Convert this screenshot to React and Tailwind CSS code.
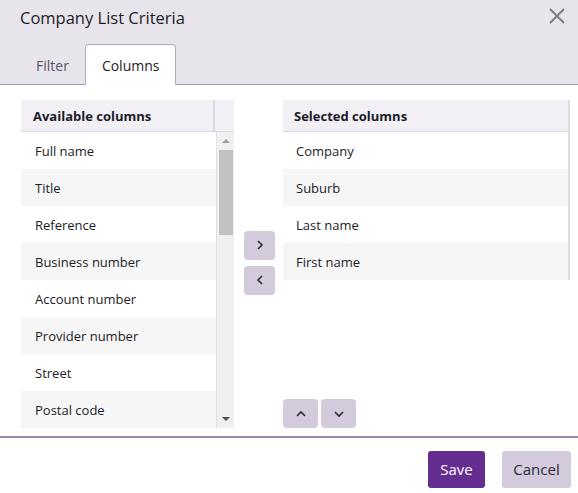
import React from 'react';

const available = [
  'Full name',
  'Title',
  'Reference',
  'Business number',
  'Account number',
  'Provider number',
  'Street',
  'Postal code',
];

const selected = ['Company', 'Suburb', 'Last name', 'First name'];

const Chevron = ({ dir }) => {
  const paths = {
    right: 'M2 1 L6 5 L2 9',
    left: 'M6 1 L2 5 L6 9',
    up: 'M1 6 L5 2 L9 6',
    down: 'M1 2 L5 6 L9 2',
  };
  const horiz = dir === 'left' || dir === 'right';
  return (
    <svg width={horiz ? 8 : 10} height={horiz ? 10 : 8} viewBox={horiz ? '0 0 8 10' : '0 0 10 8'}>
      <path d={paths[dir]} fill="none" stroke="#2a2a3a" strokeWidth="1.6" />
    </svg>
  );
};

const App = () => {
  return (
    <div
      className="w-[578px] h-[493px] bg-white flex flex-col text-[#1c1c28]"
      style={{ fontFamily: '"Open Sans", "Noto Sans", sans-serif' }}
    >
      {/* Header */}
      <div className="h-[85px] bg-[#e8e4ec] border-b border-[#a79bb2] flex flex-col">
        <div className="h-[44px] flex items-start justify-between pl-[20px] pr-[12px]">
          <span className="mt-[6px] text-[16.5px] text-[#1c1c28]">Company List Criteria</span>
          <svg width="18" height="18" viewBox="0 0 18 18" className="mt-[7px]">
            <path d="M2 2 L16 16 M16 2 L2 16" stroke="#7a7a80" strokeWidth="1.8" />
          </svg>
        </div>
        <div className="flex items-end pl-[20px] h-[40px]">
          <div className="px-4 h-[40px] pt-[2px] flex items-center text-[14px] text-[#5a5366]">Filter</div>
          <div className="px-4 h-[41px] -mb-px flex items-center text-[14px] bg-white border border-b-0 border-[#b3a9bd] rounded-t-[4px]">
            Columns
          </div>
        </div>
      </div>

      {/* Content */}
      <div className="h-[351px] flex pt-[15px] pb-[8px] pl-[21px] pr-[8px]">
        {/* Available */}
        <div className="w-[213px] flex flex-col">
          <div className="h-[32px] flex bg-[#f2f0f5] border-b border-[#dcd7e2]">
            <div className="w-[194px] flex items-center pl-[12px] pt-[2px] text-[13px] font-bold border-r-2 border-[#dcd7e2]">
              Available columns
            </div>
            <div className="flex-1" />
          </div>
          <div className="flex flex-1">
            <div className="w-[195px] flex flex-col">
              {available.map((c, i) => (
                <div
                  key={c}
                  className={`h-[37px] flex items-center pl-[14px] pt-[2px] text-[13px] ${i % 2 ? 'bg-[#f6f6f6]' : 'bg-white'}`}
                >
                  {c}
                </div>
              ))}
            </div>
            <div className="flex-1 bg-[#f0f0f0] border-l border-[#e0e0e0] flex flex-col items-center">
              <div className="h-[18px] flex items-center justify-center">
                <div className="w-0 h-0 border-l-[4px] border-r-[4px] border-b-[4px] border-l-transparent border-r-transparent border-b-[#a3a3a3]" />
              </div>
              <div className="w-[14px] h-[85px] bg-[#c1c1c1]" />
              <div className="flex-1" />
              <div className="h-[18px] flex items-center justify-center">
                <div className="w-0 h-0 border-l-[4px] border-r-[4px] border-t-[4px] border-l-transparent border-r-transparent border-t-[#505050]" />
              </div>
            </div>
          </div>
        </div>

        {/* Move buttons */}
        <div className="ml-[10px] w-[31px] flex flex-col justify-center gap-[6px] pb-[3px]">
          <button className="h-[29px] rounded-[4px] bg-[#d3cbdc] flex items-center justify-center">
            <Chevron dir="right" />
          </button>
          <button className="h-[29px] rounded-[4px] bg-[#d3cbdc] flex items-center justify-center">
            <Chevron dir="left" />
          </button>
        </div>

        {/* Selected */}
        <div className="ml-[8px] flex-1 flex flex-col justify-between">
          <div className="flex flex-col border-r-2 border-[#dedbe2]">
            <div className="h-[32px] flex items-center pl-[11px] pt-[2px] bg-[#f2f0f5] border-b border-[#dcd7e2] text-[13px] font-bold">
              Selected columns
            </div>
            {selected.map((c, i) => (
              <div
                key={c}
                className={`h-[37px] flex items-center pl-[13px] pt-[2px] text-[13px] ${i % 2 ? 'bg-[#f6f6f6]' : 'bg-white'}`}
              >
                {c}
              </div>
            ))}
          </div>
          <div className="flex gap-[3px]">
            <button className="w-[35px] h-[29px] rounded-[4px] bg-[#d3cbdc] flex items-center justify-center">
              <Chevron dir="up" />
            </button>
            <button className="w-[35px] h-[29px] rounded-[4px] bg-[#d3cbdc] flex items-center justify-center">
              <Chevron dir="down" />
            </button>
          </div>
        </div>
      </div>

      {/* Footer */}
      <div className="border-t-2 border-[#9e8aa8] flex-1 flex items-start justify-end pt-[13px] pr-[7px] gap-[17px]">
        <button className="w-[57px] h-[37px] rounded-[3px] bg-[#662d91] text-white text-[15px]">Save</button>
        <button className="w-[69px] h-[37px] rounded-[3px] bg-[#d3cbdc] text-[#2a2a3a] text-[15px]">Cancel</button>
      </div>
    </div>
  );
};

export default App;
